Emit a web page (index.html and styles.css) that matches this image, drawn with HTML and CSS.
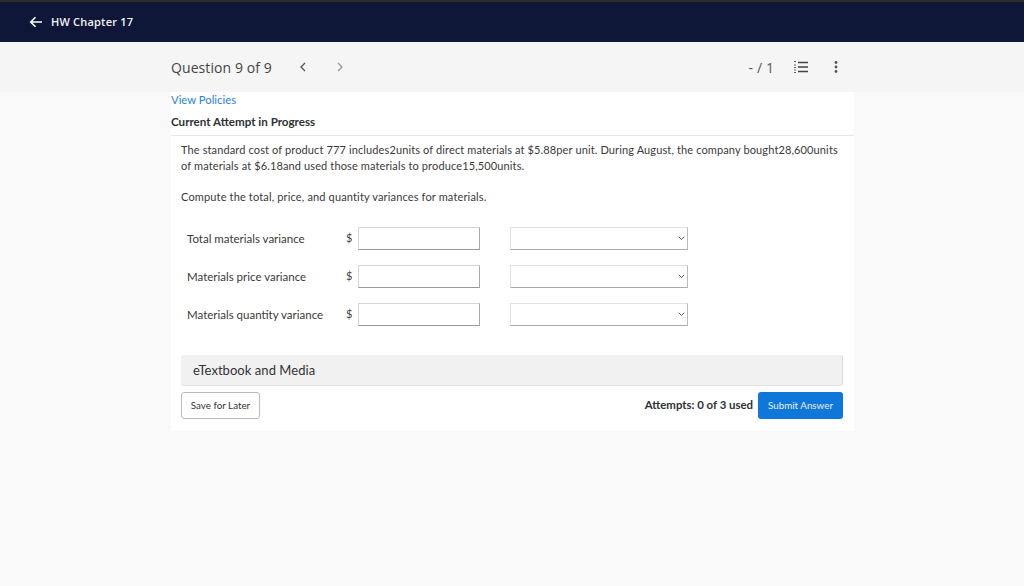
FILE: index.html
```
<!DOCTYPE html>
<html lang="en">
<head>
<meta charset="utf-8">
<title>HW Chapter 17</title>
<link rel="stylesheet" href="styles.css">
</head>
<body>
<header class="topbar">
  <svg class="back" width="14" height="12" viewBox="0 0 14 12"><path d="M13 6H2M6.500 1.200 1.700 6l4.800 4.800" fill="none" stroke="#fff" stroke-width="1.600"/></svg>
  <span class="course">HW Chapter 17</span>
</header>
<div class="qbar">
  <div class="qbar-inner">
    <span class="qtitle">Question 9 of 9</span>
    <svg class="nav-prev" width="6" height="10" viewBox="0 0 6 10"><path d="M5 1 1 5l4 4" fill="none" stroke="#555" stroke-width="1.300"/></svg>
    <svg class="nav-next" width="6" height="10" viewBox="0 0 6 10"><path d="M1 1l4 4-4 4" fill="none" stroke="#999" stroke-width="1.300"/></svg>
    <span class="score">- / 1</span>
    <svg class="list" width="15" height="12" viewBox="0 0 15 12"><path d="M0 .5h2M0 4h2M0 6.500h2M0 9h2M0 11.500h2" stroke="#666" stroke-width="1"/><path d="M4 1.500h10M4 6h10M4 10.500h10" stroke="#444" stroke-width="1.400"/></svg>
    <svg class="more" width="4" height="12" viewBox="0 0 4 12"><circle cx="2" cy="1.500" r="1.400" fill="#555"/><circle cx="2" cy="6" r="1.400" fill="#555"/><circle cx="2" cy="10.500" r="1.400" fill="#555"/></svg>
  </div>
</div>
<main class="card">
  <a class="policies" href="#">View Policies</a>
  <h1 class="attempt">Current Attempt in Progress</h1>
  <section class="body">
    <p class="problem">The standard cost of product 777 includes2units of direct materials at $5.88per unit. During August, the company bought28,600units of materials at $6.18and used those materials to produce15,500units.</p>
    <p class="prompt">Compute the total, price, and quantity variances for materials.</p>
    <div class="rows">
      <div class="row">
        <span class="label">Total materials variance</span><span class="dollar">$</span>
        <span class="input"></span>
        <span class="select"><svg width="7" height="5" viewBox="0 0 7 5"><path d="M.8.800 3.500 3.500 6.200.8" fill="none" stroke="#555"/></svg></span>
      </div>
      <div class="row">
        <span class="label">Materials price variance</span><span class="dollar">$</span>
        <span class="input"></span>
        <span class="select"><svg width="7" height="5" viewBox="0 0 7 5"><path d="M.8.800 3.500 3.500 6.200.8" fill="none" stroke="#555"/></svg></span>
      </div>
      <div class="row">
        <span class="label">Materials quantity variance</span><span class="dollar">$</span>
        <span class="input"></span>
        <span class="select"><svg width="7" height="5" viewBox="0 0 7 5"><path d="M.8.800 3.500 3.500 6.200.8" fill="none" stroke="#555"/></svg></span>
      </div>
    </div>
    <div class="media">eTextbook and Media</div>
    <div class="actions">
      <button class="save" type="button">Save for Later</button>
      <span class="attempts">Attempts: 0 of 3 used</span>
      <button class="submit" type="button">Submit Answer</button>
    </div>
  </section>
</main>
</body>
</html>
```
FILE: styles.css
```
* { box-sizing: border-box; }
html, body { margin: 0; height: 100%; }
body {
  background: #f9f9f9;
  font-family: Lato, "Liberation Sans", sans-serif;
  color: #2d3236;
  overflow: hidden;
}
.topbar {
  height: 42px;
  background: #0e1738;
  border-top: 2px solid #2e2e2e;
  display: flex;
  align-items: center;
  padding-left: 29px;
  gap: 8px;
}
.course {
  font-family: "Open Sans", sans-serif;
  font-size: 11px;
  font-weight: 600;
  color: #f2f3f5;
  letter-spacing: .2px;
  margin-bottom: 2px;
}
.qbar { height: 50px; background: #f5f5f5; }
.qbar-inner {
  width: 683px;
  height: 50px;
  margin-left: 171px;
  display: flex;
  align-items: center;
}
.qtitle { font-family: "Open Sans", sans-serif; font-size: 14px; letter-spacing: .09px; color: #444; }
.nav-prev { margin-left: 28px; }
.nav-next { margin-left: 31px; }
.score { font-family: "Open Sans", sans-serif; font-size: 14px; letter-spacing: .1px; color: #555; margin-left: auto; margin-right: 20px; }
.list { margin-right: 25px; }
.more { margin-right: 16px; }
.card {
  width: 683px;
  height: 339px;
  background: #fff;
  margin-left: 171px;
}
.policies {
  display: block;
  height: 16px;
  font-size: 11.300px;
  line-height: 16px;
  color: #1f82e0;
  text-decoration: none;
}
.attempt {
  margin: 0;
  height: 28px;
  font-size: 11.600px;
  font-weight: 700;
  line-height: 27px;
  color: #2d3236;
  border-bottom: 1px solid #e6e6e6;
}
.body { padding: 6px 11px 0 10px; }
.problem {
  margin: 0;
  font-size: 11px;
  line-height: 16px;
  color: #3a3a3a;
  letter-spacing: .125px;
}
.prompt {
  margin: 15px 0 0;
  font-size: 11px;
  line-height: 16px;
  color: #3a3a3a;
  letter-spacing: .15px;
}
.rows { margin-top: 22px; display: flex; flex-direction: column; gap: 15px; }
.row { display: flex; align-items: center; height: 23px; }
.label { width: 165px; padding-left: 6px; font-size: 11.500px; color: #3a3a3a; }
.dollar { width: 9px; font-size: 11px; color: #444; padding-bottom: 2px; }
.input {
  width: 122px;
  height: 23px;
  margin-left: 3px;
  background: #fff;
  border: 1px solid #d4d4d4;
  border-bottom-color: #999;
  border-right-color: #aaa;
}
.select {
  width: 178px;
  height: 23px;
  margin-left: 30px;
  background: #fff;
  border: 1px solid #e2e2e2;
  border-bottom-color: #aaa;
  border-right-color: #bbb;
  display: flex;
  align-items: center;
  justify-content: flex-end;
  padding-right: 2px;
}
.media {
  margin-top: 29px;
  height: 31px;
  background: #f1f1f1;
  border-radius: 3px;
  border-bottom: 1px solid #e2e2e2;
  border-right: 1px solid #d8d8d8;
  padding-left: 12px;
  font-size: 13px;
  line-height: 30px;
  letter-spacing: .05px;
  color: #333;
}
.actions { display: flex; align-items: center; margin-top: 6px; }
.save {
  width: 79px;
  height: 27px;
  background: #fff;
  border: 1px solid #bbb;
  border-radius: 3px;
  font-family: Lato, sans-serif;
  font-size: 9.800px;
  color: #333;
  padding: 0 0 2px;
}
.attempts { margin-left: auto; margin-right: 5px; margin-bottom: 3px; font-size: 11.400px; font-weight: 700; color: #2d3236; }
.submit {
  width: 85px;
  height: 27px;
  background: #0f77da;
  border: 0;
  border-radius: 3px;
  font-family: Lato, sans-serif;
  font-size: 9.800px;
  color: #e6f1fb;
  padding: 0 0 2px;
}
```
